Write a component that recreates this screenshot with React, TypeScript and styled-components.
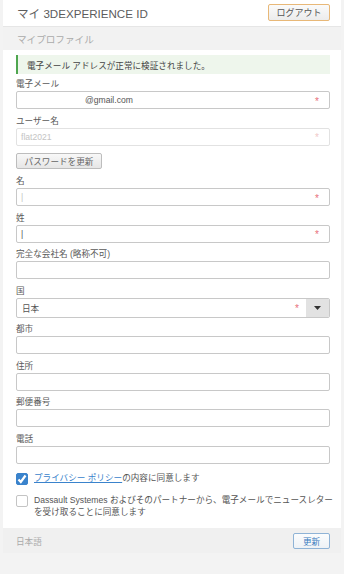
import React from 'react'
import styled, { createGlobalStyle } from 'styled-components'

const GlobalStyle = createGlobalStyle`
  body {
    margin: 0;
    background: #f3f3f3;
    font-family: "Liberation Sans", "Noto Sans CJK JP", sans-serif;
    color: #555;
  }
`

type FieldProps = {
  label: string
  value?: string
  indent?: number
  required?: boolean
  disabled?: boolean
  faint?: boolean
}

const Field = ({ label, value, indent, required, disabled, faint }: FieldProps) => (
  <Group>
    <Label>{label}</Label>
    <Box $disabled={disabled}>
      <Value $indent={indent || 0} $faint={faint || disabled}>{value}</Value>
      {required && <Star $disabled={disabled}>*</Star>}
    </Box>
  </Group>
)

const App = () => {
  return (
    <>
      <GlobalStyle />
      <Card>
        <Header>
          <Title>マイ 3DEXPERIENCE ID</Title>
          <LogoutButton>ログアウト</LogoutButton>
        </Header>
        <SectionBar>マイプロファイル</SectionBar>
        <Form>
          <Alert>電子メール アドレスが正常に検証されました。</Alert>
          <Field label="電子メール" value="@gmail.com" indent={64} required />
          <Field label="ユーザー名" value="flat2021" required disabled />
          <PasswordButton>パスワードを更新</PasswordButton>
          <Field label="名" value="|" required faint />
          <Field label="姓" value="|" required />
          <Field label="完全な会社名 (略称不可)" />
          <Group>
            <Label>国</Label>
            <SelectBox>
              <Value $indent={1}>日本</Value>
              <Star>*</Star>
              <DropButton>
                <svg width="7" height="4" viewBox="0 0 7 4">
                  <path d="M0 0h7L3.5 4z" fill="#333" />
                </svg>
              </DropButton>
            </SelectBox>
          </Group>
          <Field label="都市" />
          <Field label="住所" />
          <Field label="郵便番号" />
          <Field label="電話" />
          <CheckRow>
            <CheckBox $checked>
              <svg width="10" height="10" viewBox="0 0 10 10">
                <path d="M1.5 5.5l2.3 2.5L8.5 1.5" fill="none" stroke="#fff" strokeWidth="2.2" />
              </svg>
            </CheckBox>
            <CheckText>
              <Link>プライバシー ポリシー</Link>の内容に同意します
            </CheckText>
          </CheckRow>
          <CheckRow>
            <CheckBox />
            <CheckText>
              Dassault Systemes およびそのパートナーから、電子メールでニュースレター<br />
              を受け取ることに同意します
            </CheckText>
          </CheckRow>
        </Form>
        <Footer>
          <Lang>日本語</Lang>
          <UpdateButton>更新</UpdateButton>
        </Footer>
      </Card>
    </>
  )
}

export default App

const Card = styled.div`
  margin: 0 3px;
  background: #fff;
`

const Header = styled.div`
  height: 27px;
  display: flex;
  align-items: center;
  justify-content: space-between;
  padding: 0 11px 0 14px;
  border-bottom: 1px solid #e6e6e6;
  box-sizing: border-box;
`

const Title = styled.div`
  font-size: 11.6px;
  color: #5c5c5c;
`

const LogoutButton = styled.button`
  width: 62px;
  height: 17px;
  margin-top: -1px;
  padding: 0;
  font-family: inherit;
  font-size: 9px;
  color: #555;
  border: 1px solid #e8b878;
  border-radius: 2px;
  background: linear-gradient(#fafafa, #ececec);
`

const SectionBar = styled.div`
  height: 23px;
  display: flex;
  align-items: center;
  padding-left: 14px;
  background: #f2f2f2;
  color: #aaa;
  font-size: 9.6px;
`

const Form = styled.div`
  padding: 5px 11px 4px 13px;
  display: flex;
  flex-direction: column;
`

const Alert = styled.div`
  height: 19px;
  display: flex;
  align-items: center;
  padding-left: 9px;
  background: #eef6ec;
  border-left: 2px solid #4fa64f;
  font-size: 8.6px;
  color: #444;
  margin-bottom: 4px;
`

const Group = styled.div`
  display: flex;
  flex-direction: column;
  margin-bottom: 5.5px;
`

const Label = styled.div`
  height: 13px;
  line-height: 13px;
  font-size: 8.6px;
  color: #5a5a5a;
`

const Box = styled.div<{ $disabled?: boolean }>`
  height: 18px;
  box-sizing: border-box;
  display: flex;
  align-items: center;
  padding: 0 10px 0 4px;
  border: 1px solid ${p => (p.$disabled ? '#e2e2e2' : '#c8c8c8')};
  border-radius: 2px;
  background: #fff;
`

const Value = styled.span<{ $indent: number; $faint?: boolean }>`
  flex: 1;
  padding-left: ${p => p.$indent}px;
  font-size: 8.6px;
  color: ${p => (p.$faint ? '#c4c4c4' : '#555')};
`

const Star = styled.span<{ $disabled?: boolean }>`
  font-size: 10px;
  line-height: 1;
  margin-top: 3px;
  color: ${p => (p.$disabled ? '#f0c8c8' : '#e8707a')};
`

const SelectBox = styled(Box)`
  padding-right: 0;
  overflow: hidden;
  height: 20px;

  ${Star} {
    margin-right: 7px;
  }
`

const DropButton = styled.div`
  width: 23px;
  align-self: stretch;
  display: flex;
  align-items: center;
  justify-content: center;
  background: #e2e2e2;
`

const PasswordButton = styled.button`
  align-self: flex-start;
  width: 86px;
  height: 16px;
  margin: 2px 0 6px;
  padding: 0;
  font-family: inherit;
  font-size: 8.6px;
  color: #666;
  border: 1px solid #bdbdbd;
  border-radius: 2px;
  background: linear-gradient(#f8f8f8, #e6e6e6);
`

const CheckRow = styled.div`
  display: flex;
  align-items: flex-start;
  gap: 6px;
  margin-top: 4px;
  margin-bottom: 6px;
`

const CheckBox = styled.div<{ $checked?: boolean }>`
  width: 12px;
  height: 12px;
  flex-shrink: 0;
  box-sizing: border-box;
  border-radius: 2px;
  border: 1px solid ${p => (p.$checked ? '#3a83cc' : '#c4c4c4')};
  background: ${p => (p.$checked ? '#3a83cc' : '#fff')};
  display: flex;
  align-items: center;
  justify-content: center;
`

const CheckText = styled.div`
  font-size: 8.6px;
  line-height: 11.5px;
  color: #555;
  white-space: nowrap;
`

const Link = styled.span`
  color: #3a83cc;
  text-decoration: underline;
`

const Footer = styled.div`
  height: 25px;
  display: flex;
  align-items: center;
  justify-content: space-between;
  padding: 0 11px 0 13px;
  background: #f0f0f0;
`

const Lang = styled.span`
  font-size: 8.6px;
  color: #aaa;
`

const UpdateButton = styled.button`
  width: 37px;
  height: 16px;
  padding: 0;
  font-family: inherit;
  font-size: 8.6px;
  color: #3a7cc0;
  border: 1px solid #8fb3d6;
  border-radius: 2px;
  background: linear-gradient(#fbfcfd, #eef2f6);
`
